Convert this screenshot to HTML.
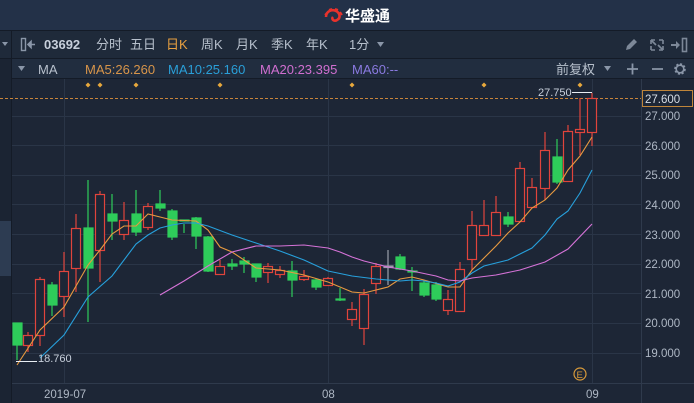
<!DOCTYPE html>
<html><head><meta charset="utf-8"><style>
html,body{margin:0;padding:0;width:694px;height:403px;overflow:hidden;background:#1d2636;font-family:"Liberation Sans","Noto Sans CJK SC",sans-serif}
svg{display:block}
text{font-family:"Liberation Sans","Noto Sans CJK SC",sans-serif}
</style></head><body>
<svg width="694" height="403" viewBox="0 0 694 403" xmlns="http://www.w3.org/2000/svg">
<rect x="0" y="0" width="694" height="403" fill="#1d2636"/>
<!-- top bar -->
<rect x="0" y="0" width="694" height="30" fill="#233148"/>
<rect x="0" y="30" width="694" height="1" fill="#141b27"/>
<!-- toolbar -->
<rect x="0" y="31" width="694" height="27" fill="#1f2a3a"/>
<rect x="0" y="58" width="694" height="1" fill="#141b27"/>
<rect x="12" y="59" width="682" height="19" fill="#212d3f"/>
<rect x="0" y="78" width="694" height="1" fill="#141b27"/>
<rect x="11" y="31" width="1" height="372" fill="#141b27"/>
<rect x="0" y="59" width="11" height="344" fill="#1b2433"/>
<rect x="0" y="221" width="11" height="55" fill="#2d3c52"/>
<!-- logo -->
<g transform="translate(323,7)">
<path d="M3 10 C3 4 9 2 13 4 C17 6 18 11 14 13 C11 15 8 12 10 10" stroke="#e8322c" stroke-width="2.6" fill="none"/>
<path d="M2 8 L5 5 M6 3 L9 2 M12 2 L15 3 M17 5 L19 8" stroke="#e8322c" stroke-width="2"/>
</g>
<text x="345" y="21" font-size="15" font-weight="bold" fill="#ffffff">华盛通</text>
<!-- toolbar content -->
<path d="M2 42 L8 42 L5 46 Z" fill="#8a96a8"/>
<rect x="21.5" y="38.5" width="4" height="12" fill="none" stroke="#8a96a8" stroke-width="1.4"/>
<path d="M28 44.5 L35 44.5 M28 44.5 L31 41.5 L31 47.5 Z" stroke="#8a96a8" stroke-width="1.6" fill="#8a96a8"/>
<text x="44" y="49" font-size="13" font-weight="bold" fill="#c8d0dc">03692</text>
<g font-size="13" fill="#b7c0cc">
<text x="96" y="49">分时</text><text x="130" y="49">五日</text>
<text x="166" y="49" fill="#e8a040">日K</text>
<text x="201" y="49">周K</text><text x="236" y="49">月K</text><text x="271" y="49">季K</text><text x="306" y="49">年K</text>
<text x="349" y="49">1分</text>
</g>
<path d="M377 42 L384 42 L380.5 47 Z" fill="#8a96a8"/>
<!-- right icons -->
<path d="M626 50 L627 46 L634 39 L637 42 L630 49 Z" fill="#7d8898"/>
<g stroke="#7d8898" stroke-width="1.6" fill="none"><path d="M651 40 L655 40 M651 40 L651 44 M663 40 L659 40 M663 40 L663 44 M651 50 L655 50 M651 50 L651 46 M663 50 L663 46 M663 50 L659 50 M652 41 L656 45 M662 49 L658 45"/></g>
<path d="M671 45 L677 45" stroke="#7d8898" stroke-width="2"/><path d="M676 41 L680 45 L676 49 Z" fill="#7d8898"/>
<rect x="682.5" y="38.5" width="4" height="13" fill="none" stroke="#7d8898" stroke-width="1.6"/>
<!-- MA row -->
<path d="M18 66 L25 66 L21.5 71 Z" fill="#8a96a8"/>
<text x="38" y="74" font-size="13" fill="#b7c0cc">MA</text>
<text x="85" y="74" font-size="13" fill="#d8954a">MA5:26.260</text>
<text x="168" y="74" font-size="13" fill="#2a9fd8">MA10:25.160</text>
<text x="260" y="74" font-size="13" fill="#d06fd0">MA20:23.395</text>
<text x="352" y="74" font-size="13" fill="#8a7ae0">MA60:--</text>
<text x="556" y="74" font-size="13" fill="#b7c0cc">前复权</text>
<path d="M604 66 L611 66 L607.5 71 Z" fill="#8a96a8"/>
<path d="M627 69 L638 69 M632.5 63.5 L632.5 74.5 M652 69 L663 69" stroke="#8a96a8" stroke-width="1.8"/>
<circle cx="680" cy="69" r="4.5" fill="none" stroke="#8a96a8" stroke-width="2.6" stroke-dasharray="2 1.5"/>
<circle cx="680" cy="69" r="3.8" fill="none" stroke="#8a96a8" stroke-width="1.6"/>
<!-- grid -->
<g stroke="#2a3547" stroke-width="1">
<path d="M12 116.5 H641 M12 145.5 H641 M12 175.5 H641 M12 204.5 H641 M12 234.5 H641 M12 264.5 H641 M12 293.5 H641 M12 323.5 H641 M12 353.5 H641"/>
<path d="M64.5 79 V383 M328.5 79 V383 M592.5 79 V383"/>
</g>
<rect x="12" y="383" width="682" height="1" fill="#2f3a4c"/>
<rect x="641" y="79" width="1" height="324" fill="#2f3a4c"/>
<!-- diamonds -->
<g fill="#e8a83c">
<path d="M88 82.5 L90.5 85 L88 87.5 L85.5 85 Z"/><path d="M100 82.5 L102.5 85 L100 87.5 L97.5 85 Z"/>
<path d="M136 82.5 L138.5 85 L136 87.5 L133.5 85 Z"/><path d="M220 82.5 L222.5 85 L220 87.5 L217.5 85 Z"/>
<path d="M352 82.5 L354.5 85 L352 87.5 L349.5 85 Z"/><path d="M484 82.5 L486.5 85 L484 87.5 L481.5 85 Z"/>
<path d="M580 82.5 L582.5 85 L580 87.5 L577.5 85 Z"/>
</g>
<path d="M0 98.5 H641" stroke="#c8843a" stroke-width="1" stroke-dasharray="3 2"/>
<!-- candles -->
<g stroke-width="1.2">
<g stroke="#2ecc5a" fill="#2ecc5a">
<line x1="17" y1="323" x2="17" y2="360"/><rect x="13" y="323" width="9" height="22"/>
<line x1="52" y1="282" x2="52" y2="316"/><rect x="48" y="285" width="9" height="20"/>
<line x1="88" y1="180" x2="88" y2="322"/><rect x="84" y="228" width="9" height="40"/>
<line x1="112" y1="194" x2="112" y2="240"/><rect x="108" y="214" width="9" height="7"/>
<line x1="136" y1="190" x2="136" y2="236"/><rect x="132" y="214" width="9" height="18"/>
<line x1="160" y1="190" x2="160" y2="211"/><rect x="156" y="204" width="9" height="4"/>
<line x1="172" y1="209" x2="172" y2="240"/><rect x="168" y="211" width="9" height="26"/>
<line x1="184" y1="224" x2="184" y2="233"/><rect x="180" y="220" width="9" height="1"/>
<line x1="196" y1="217" x2="196" y2="249"/><rect x="192" y="218" width="9" height="18"/>
<line x1="208" y1="236" x2="208" y2="272"/><rect x="204" y="237" width="9" height="34"/>
<line x1="232" y1="259" x2="232" y2="270"/><rect x="228" y="264" width="9" height="2"/>
<line x1="244" y1="257" x2="244" y2="273"/><rect x="240" y="261" width="9" height="3"/>
<line x1="256" y1="264" x2="256" y2="282"/><rect x="252" y="264" width="9" height="13"/>
<line x1="292" y1="261" x2="292" y2="297"/><rect x="288" y="271" width="9" height="9"/>
<line x1="316" y1="279" x2="316" y2="290"/><rect x="312" y="280" width="9" height="7"/>
<line x1="340" y1="288" x2="340" y2="301"/><rect x="336" y="299" width="9" height="1"/>
<line x1="400" y1="254" x2="400" y2="270"/><rect x="396" y="257" width="9" height="12"/>
<line x1="412" y1="267" x2="412" y2="291"/><rect x="408" y="271" width="9" height="1"/>
<line x1="424" y1="281" x2="424" y2="297"/><rect x="420" y="283" width="9" height="12"/>
<line x1="436" y1="282" x2="436" y2="301"/><rect x="432" y="285" width="9" height="14"/>
<line x1="508" y1="212" x2="508" y2="227"/><rect x="504" y="217" width="9" height="7"/>
<line x1="557" y1="139" x2="557" y2="184"/><rect x="553" y="157" width="9" height="25"/>
</g>
<g stroke="#9aa0aa" fill="#9aa0aa">
<line x1="388" y1="250" x2="388" y2="285"/><rect x="384" y="266" width="9" height="1.5"/>
</g>
<g stroke="#e0443c" fill="#1d2636">
<line x1="28" y1="332" x2="28" y2="352"/><rect x="23.5" y="335.5" width="9" height="10"/>
<line x1="40" y1="277" x2="40" y2="346"/><rect x="35.5" y="279.5" width="9" height="56"/>
<line x1="64" y1="252" x2="64" y2="317"/><rect x="59.5" y="271.5" width="9" height="25"/>
<line x1="76" y1="214" x2="76" y2="292"/><rect x="71.5" y="228.5" width="9" height="40"/>
<line x1="100" y1="191" x2="100" y2="282"/><rect x="95.5" y="194.5" width="9" height="56"/>
<line x1="124" y1="202" x2="124" y2="240"/><rect x="119.5" y="220.5" width="9" height="14"/>
<line x1="148" y1="203" x2="148" y2="230"/><rect x="143.5" y="206.5" width="9" height="21"/>
<line x1="220" y1="260" x2="220" y2="275"/><rect x="215.5" y="266.5" width="9" height="8"/>
<line x1="268" y1="263" x2="268" y2="283"/><rect x="263.5" y="266.5" width="9" height="6"/>
<line x1="280" y1="266" x2="280" y2="278"/><rect x="275.5" y="270.5" width="9" height="4"/>
<line x1="304" y1="270" x2="304" y2="281"/><rect x="299.5" y="276.5" width="9" height="3"/>
<line x1="328" y1="277" x2="328" y2="286"/><rect x="323.5" y="278.5" width="9" height="7"/>
<line x1="352" y1="302" x2="352" y2="326"/><rect x="347.5" y="309.5" width="9" height="10"/>
<line x1="364" y1="289" x2="364" y2="345"/><rect x="359.5" y="294.5" width="9" height="34"/>
<line x1="376" y1="263" x2="376" y2="294"/><rect x="371.5" y="266.5" width="9" height="17"/>
<line x1="448" y1="290" x2="448" y2="315"/><rect x="443.5" y="299.5" width="9" height="11"/>
<line x1="460" y1="262" x2="460" y2="311"/><rect x="455.5" y="269.5" width="9" height="42"/>
<line x1="472" y1="211" x2="472" y2="270"/><rect x="467.5" y="225.5" width="9" height="34"/>
<line x1="484" y1="200" x2="484" y2="235"/><rect x="479.5" y="225.5" width="9" height="10"/>
<line x1="496" y1="196" x2="496" y2="235"/><rect x="491.5" y="212.5" width="9" height="23"/>
<line x1="520" y1="162" x2="520" y2="222"/><rect x="515.5" y="168.5" width="9" height="53"/>
<line x1="532" y1="178" x2="532" y2="208"/><rect x="527.5" y="187.5" width="9" height="20"/>
<line x1="545" y1="132" x2="545" y2="200"/><rect x="540.5" y="150.5" width="9" height="38"/>
<line x1="568" y1="125" x2="568" y2="181"/><rect x="563.5" y="131.5" width="9" height="50"/>
<line x1="580" y1="98" x2="580" y2="155"/><rect x="575.5" y="129.5" width="9" height="3"/>
<line x1="592" y1="93" x2="592" y2="146"/><rect x="587.5" y="98.5" width="9" height="34"/>
</g>
</g>
<!-- MA lines -->
<g fill="none" stroke-width="1.1">
<polyline stroke="#e89a40" points="17,365 40,330 64,307 88,265 100,250 112,234 124,226 136,226 148,214 160,217 172,220 196,221 208,230 220,247 232,252 256,268 280,270 304,275 328,282 352,292 364,293 376,290 388,287 400,279 412,277 424,280 448,287 460,287 472,270 484,258 496,246 508,233 520,222 532,208 545,200 557,188 568,170 580,156 592,137"/>
<polyline stroke="#27a0dc" points="40,358 64,335 88,297 112,276 136,244 148,235 160,228 172,225 184,223 196,223 208,226 232,235 256,243 280,251 304,260 328,271 352,276 376,279 400,281 412,280 424,281 436,283 448,286 460,282 472,273 484,266 508,260 520,254 532,248 545,235 557,219 568,211 580,193 592,170"/>
<polyline stroke="#d673d8" points="160,295 184,281 208,266 232,252 256,246 280,246 304,245 328,248 340,252 352,257 364,261 376,264 388,267 412,271 436,276 448,280 460,281 472,278 496,275 520,270 545,262 568,249 592,224"/>
</g>
<!-- labels -->
<path d="M16 361.5 H37 M572 92.5 H592" stroke="#e8eef4" stroke-width="1"/>
<text x="38" y="362" font-size="11" fill="#c8d0dc">18.760</text>
<text x="538" y="96" font-size="11" fill="#c8d0dc">27.750</text>
<rect x="642.5" y="90.5" width="50" height="16" fill="#1d2636" stroke="#c0853a"/>
<text x="645" y="103" font-size="11.5" fill="#d8dee6">27.600</text>
<g font-size="11.5" fill="#aeb7c4">
<text x="645" y="120">27.000</text><text x="645" y="150">26.000</text><text x="645" y="179">25.000</text>
<text x="645" y="209">24.000</text><text x="645" y="239">23.000</text><text x="645" y="268">22.000</text>
<text x="645" y="298">21.000</text><text x="645" y="327">20.000</text><text x="645" y="357">19.000</text>
</g>
<circle cx="580" cy="374" r="6" fill="none" stroke="#d89a3a" stroke-width="1.2"/>
<text x="576.5" y="378" font-size="9.5" fill="#d89a3a">E</text>
<g font-size="11.5" fill="#aeb7c4">
<text x="44" y="398">2019-07</text><text x="322" y="398">08</text><text x="586" y="398">09</text>
</g>
</svg>
</body></html>
